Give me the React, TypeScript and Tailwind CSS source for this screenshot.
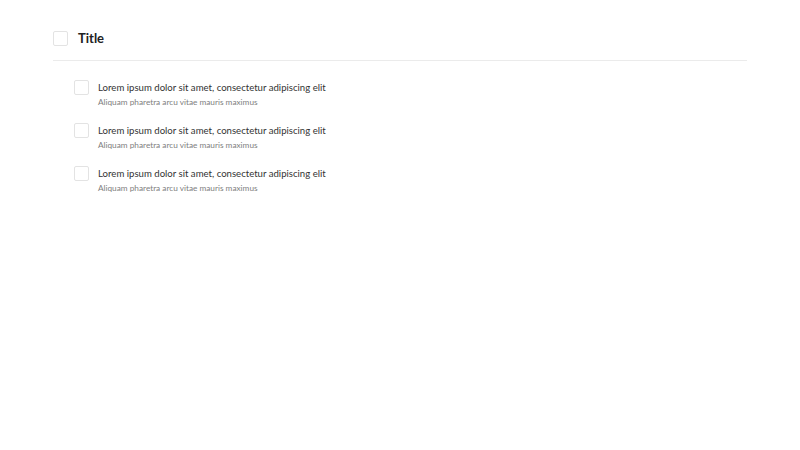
const items = [1, 2, 3];

function Box() {
  return <span className="block w-[15px] h-[15px] rounded-[2px] border border-[#e3e3e3] bg-white shrink-0" />;
}

export default function App() {
  return (
    <div className="min-h-[450px] bg-white px-[53px] pt-[30px] font-['Lato',sans-serif] text-[#333]">
      <div className="flex items-center gap-[10px] pb-[14px] border-b border-[#ebebeb]">
        <Box />
        <span className="text-[13px] font-bold text-[#222] leading-[16px]">Title</span>
      </div>
      <div className="pl-[21px] pt-[19px] flex flex-col gap-[14px]">
        {items.map((i) => (
          <div key={i} className="flex items-start gap-[9px]">
            <Box />
            <div className="flex flex-col">
              <span className="text-[9.6px] leading-[15px] text-[#333]">Lorem ipsum dolor sit amet, consectetur adipiscing elit</span>
              <span className="text-[8.25px] leading-[14px] text-[#808080]">Aliquam pharetra arcu vitae mauris maximus</span>
            </div>
          </div>
        ))}
      </div>
    </div>
  );
}
